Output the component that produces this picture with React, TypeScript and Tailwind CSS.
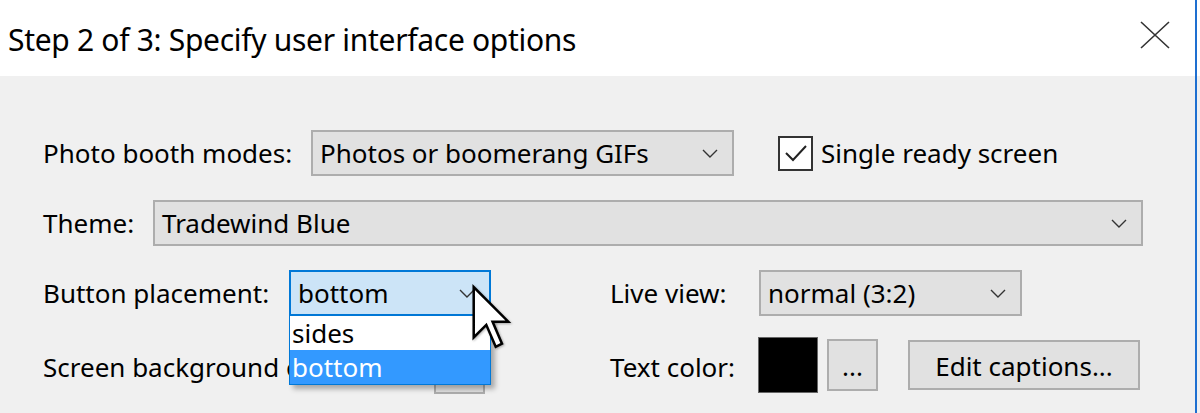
import { useState } from "react";

function Chevron() {
  return (
    <svg width="16" height="9" viewBox="0 0 16 9" className="shrink-0">
      <path d="M1 1 L8 8 L15 1" fill="none" stroke="#333" strokeWidth="1.4" />
    </svg>
  );
}

interface ComboProps {
  value: string;
  width: string;
  active?: boolean;
}

function Combo({ value, width, active }: ComboProps) {
  return (
    <div
      className={`${width} h-[46px] flex items-center justify-between pl-[7px] pr-[14px] border-2 ${
        active ? "bg-[#cce4f7] border-[#0078d7]" : "bg-[#e1e1e1] border-[#adadad]"
      }`}
    >
      <span className="whitespace-nowrap">{value}</span>
      <Chevron />
    </div>
  );
}

function Cursor() {
  return (
    <svg
      width="42"
      height="66"
      viewBox="0 0 13 21"
      className="absolute left-[470px] top-[284px] z-20 drop-shadow-[1px_1px_1px_rgba(0,0,0,0.3)]"
    >
      <path
        d="M1 1 V17 L5 13 L8 20 L10 19 L7 12 H12 Z"
        fill="#fff"
        stroke="#000"
        strokeWidth="0.8"
        strokeLinejoin="miter"
      />
    </svg>
  );
}

export default function App() {
  const [single, setSingle] = useState(true);

  return (
    <div
      className="relative w-[1200px] h-[413px] overflow-hidden bg-[#f0f0f0] text-black text-[26px]"
      style={{ fontFamily: '"Noto Sans", "Open Sans", sans-serif' }}
    >
      {/* title bar */}
      <div className="h-[76px] bg-white flex items-center justify-between pl-[8px] pr-[30px]">
        <span className="text-[30px] tracking-[-0.3px] mt-[2px]">Step 2 of 3: Specify user interface options</span>
        <svg width="30" height="28" viewBox="0 0 30 28" className="mb-[6px]">
          <path d="M1 1 L29 27 M29 1 L1 27" stroke="#333" strokeWidth="1.6" />
        </svg>
      </div>
      <div className="absolute right-[3px] top-0 w-[2px] h-full bg-[#1e6fd0]" />

      <div className="pl-[43px] pt-[54px] flex flex-col">
        {/* row 1 */}
        <div className="flex items-center h-[46px]">
          <span className="w-[268px] whitespace-nowrap">Photo booth modes:</span>
          <Combo value="Photos or boomerang GIFs" width="w-[423px]" />
          <button
            className="ml-[44px] flex items-center gap-[8px]"
            onClick={() => setSingle(!single)}
          >
            <span className="w-[35px] h-[35px] border-2 border-[#333] bg-white flex items-center justify-center">
              {single && (
                <svg width="24" height="20" viewBox="0 0 24 20">
                  <path d="M2 10 L9 17 L22 3" fill="none" stroke="#222" strokeWidth="2" />
                </svg>
              )}
            </span>
            <span className="whitespace-nowrap">Single ready screen</span>
          </button>
        </div>

        {/* row 2 */}
        <div className="flex items-center h-[46px] mt-[24px]">
          <span className="w-[110px]">Theme:</span>
          <Combo value="Tradewind Blue" width="w-[990px]" />
        </div>

        {/* row 3 */}
        <div className="flex items-center h-[46px] mt-[24px]">
          <div className="w-[567px] flex items-center">
            <span className="w-[246px] whitespace-nowrap">Button placement:</span>
            <div className="relative">
              <Combo value="bottom" width="w-[202px]" active />
              <div className="absolute left-0 top-[45px] w-[202px] z-10 border border-[#0078d7] bg-white shadow-[4px_4px_5px_rgba(0,0,0,0.3)]">
                <div className="h-[34px] flex items-center pl-[2px] bg-white">sides</div>
                <div className="h-[34px] flex items-center pl-[2px] bg-[#3399ff] text-white">bottom</div>
              </div>
            </div>
          </div>
          <span className="w-[149px] whitespace-nowrap">Live view:</span>
          <Combo value="normal (3:2)" width="w-[263px]" />
        </div>

        {/* row 4 */}
        <div className="flex items-center h-[56px] mt-[21px]">
          <div className="w-[567px] flex items-center">
            {/* label runs under the open list, clip it where the list starts */}
            <span className="w-[246px] overflow-hidden whitespace-nowrap pt-[4px]">Screen background color:</span>
            <div className="ml-[145px] w-[51px] h-[52px] mt-[6px] border-2 border-[#adadad] bg-[#e1e1e1]" />
          </div>
          <span className="w-[148px] whitespace-nowrap pt-[4px]">Text color:</span>
          <div className="w-[60px] h-[56px] bg-black border border-[#666]" />
          <button className="ml-[9px] w-[51px] h-[52px] border-2 border-[#adadad] bg-[#e1e1e1] flex items-end justify-center pb-[10px] leading-none">
            ...
          </button>
          <button className="ml-[30px] w-[232px] h-[50px] border-2 border-[#adadad] bg-[#e1e1e1] flex items-center justify-center pt-[2px]">
            Edit captions...
          </button>
        </div>
      </div>

      <Cursor />
    </div>
  );
}
